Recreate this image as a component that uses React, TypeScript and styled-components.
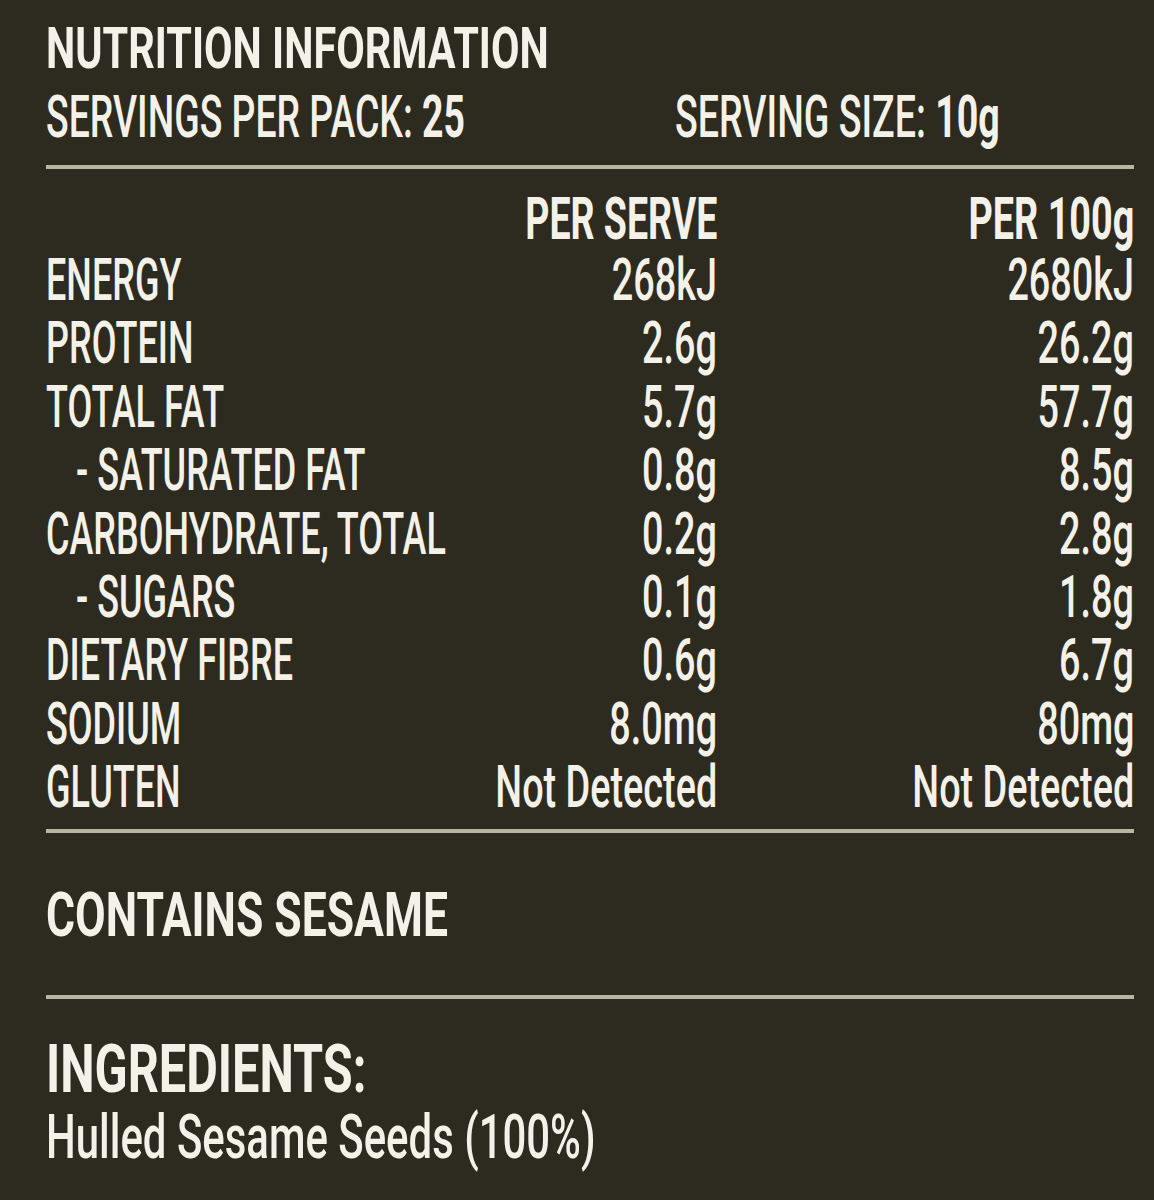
import React from "react";
import styled, { createGlobalStyle } from "styled-components";

const rows = [
  { label: "ENERGY", serve: "268kJ", per100: "2680kJ" },
  { label: "PROTEIN", serve: "2.6g", per100: "26.2g" },
  { label: "TOTAL FAT", serve: "5.7g", per100: "57.7g" },
  { label: "- SATURATED FAT", serve: "0.8g", per100: "8.5g", sub: true },
  { label: "CARBOHYDRATE, TOTAL", serve: "0.2g", per100: "2.8g" },
  { label: "- SUGARS", serve: "0.1g", per100: "1.8g", sub: true },
  { label: "DIETARY FIBRE", serve: "0.6g", per100: "6.7g" },
  { label: "SODIUM", serve: "8.0mg", per100: "80mg" },
  { label: "GLUTEN", serve: "Not Detected", per100: "Not Detected" },
];

const GlobalStyle = createGlobalStyle`
  html, body {
    margin: 0;
    padding: 0;
    background: #2d2a20;
  }
  body {
    font-family: Roboto, "Liberation Sans", sans-serif;
    color: #f3f1e8;
  }
`;

const App: React.FC = () => {
  return (
    <Panel>
      <GlobalStyle />
      <Header>
        <Txt $bold $size={58} $scale={0.714}>
          NUTRITION INFORMATION
        </Txt>
      </Header>
      <Servings>
        <Txt $scale={0.623}>
          SERVINGS PER PACK: <b>25</b>
        </Txt>
        <Txt $scale={0.626}>
          SERVING SIZE: <b>10g</b>
        </Txt>
      </Servings>
      <Rule />
      <Table>
        <span />
        <Cell $right>
          <HeadTxt $bold $right $scale={0.625}>
            PER SERVE
          </HeadTxt>
        </Cell>
        <Cell $right>
          <HeadTxt $bold $right $scale={0.63}>
            PER 100g
          </HeadTxt>
        </Cell>
        {rows.map((r) => (
          <React.Fragment key={r.label}>
            <Cell $indent={r.sub}>
              <Txt>{r.label}</Txt>
            </Cell>
            <Cell $right>
              <Txt $right $scale={0.63}>
                {r.serve}
              </Txt>
            </Cell>
            <Cell $right>
              <Txt $right $scale={0.63}>
                {r.per100}
              </Txt>
            </Cell>
          </React.Fragment>
        ))}
      </Table>
      <Rule />
      <Allergen>
        <Txt $bold $size={62} $scale={0.717}>
          CONTAINS SESAME
        </Txt>
      </Allergen>
      <Rule />
      <Ingredients>
        <Txt $bold $size={66} $scale={0.737}>
          INGREDIENTS:
        </Txt>
        <Txt $size={62} $scale={0.676}>
          Hulled Sesame Seeds (100%)
        </Txt>
      </Ingredients>
    </Panel>
  );
};

const Panel = styled.div`
  width: 1088px;
  margin-left: 46px;
  padding-top: 17px;
  padding-bottom: 30px;
  overflow: hidden;
`;

const Txt = styled.span<{
  $bold?: boolean;
  $right?: boolean;
  $size?: number;
  $scale?: number;
}>`
  display: inline-block;
  font-size: ${(p) => p.$size ?? 60}px;
  line-height: 63px;
  font-weight: ${(p) => (p.$bold ? 700 : 500)};
  white-space: nowrap;
  transform: scaleX(${(p) => p.$scale ?? 0.6});
  transform-origin: ${(p) => (p.$right ? "right" : "left")} center;
  b {
    font-weight: 700;
  }
`;

const HeadTxt = styled(Txt)`
  line-height: 58.5px;
`;

const Header = styled.div`
  height: 68px;
`;

const Servings = styled.div`
  display: grid;
  grid-template-columns: 629px minmax(0, 1fr);
  height: 80px;
`;

const Rule = styled.div`
  height: 4px;
  background: #b9b5a3;
`;

const Table = styled.div`
  display: grid;
  grid-template-columns: minmax(0, 1fr) 220px 417px;
  grid-template-rows: 58.5px;
  grid-auto-rows: 63.4px;
  padding-top: 20.5px;
  padding-bottom: 10px;
`;

const Cell = styled.div<{ $right?: boolean; $indent?: boolean }>`
  display: flex;
  min-width: 0;
  justify-content: ${(p) => (p.$right ? "flex-end" : "flex-start")};
  padding-left: ${(p) => (p.$indent ? "30px" : "0")};
`;

const Allergen = styled.div`
  box-sizing: border-box;
  height: 162px;
  padding-top: 50px;
`;

const Ingredients = styled.div`
  display: flex;
  flex-direction: column;
  gap: 4px;
  padding-top: 39px;
`;

export default App;
